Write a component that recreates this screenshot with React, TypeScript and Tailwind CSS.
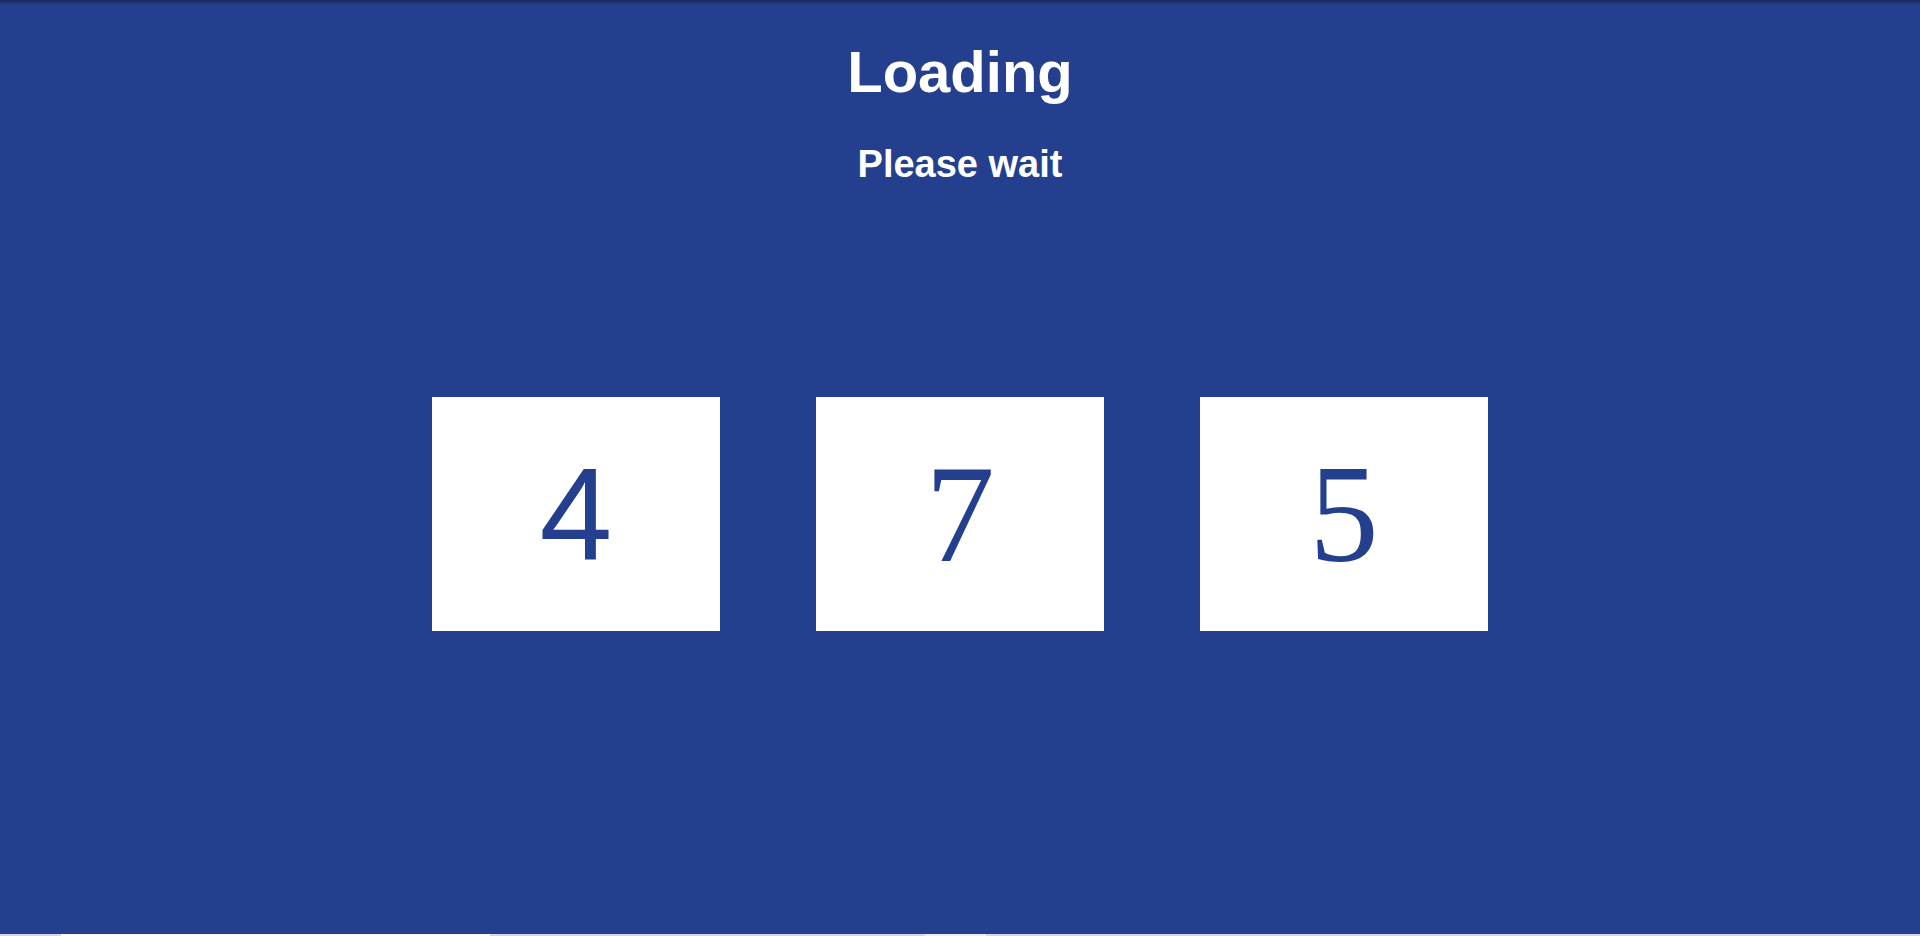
import React from "react";

const digits = [
  { value: "4", font: "font-['Liberation_Sans',Arial,sans-serif] text-[131px]" },
  { value: "7", font: "font-['Liberation_Serif','Times_New_Roman',serif] text-[139px]" },
  { value: "5", font: "font-['Liberation_Serif','Times_New_Roman',serif] text-[139px]" },
];

const App: React.FC = () => {
  return (
    <div className="flex h-[936px] w-full flex-col overflow-hidden font-['Liberation_Sans',Arial,sans-serif]">
      <main className="flex h-[934px] flex-col items-center bg-[#243f8e] bg-[linear-gradient(to_bottom,#18295c_0px,#243f8e_5px)] pt-[43px] text-white">
        <h1 className="text-[58px] font-bold leading-none">Loading</h1>
        <h2 className="mt-[44px] text-[38px] font-bold leading-none">Please wait</h2>
        <div className="mt-[214px] flex gap-[96px]">
          {digits.map((d, i) => (
            <div
              key={i}
              className="flex h-[234px] w-[288px] items-center justify-center bg-white text-[#243f8e]"
            >
              <span className={`${d.font} leading-none`}>{d.value}</span>
            </div>
          ))}
        </div>
      </main>
      <div className="flex h-[2px] bg-[#d6d9e2]">
        <div className="ml-[61px] w-[429px] bg-white" />
        <div className="ml-[435px] w-[61px] bg-[#eef0f5]" />
      </div>
    </div>
  );
};

export default App;
